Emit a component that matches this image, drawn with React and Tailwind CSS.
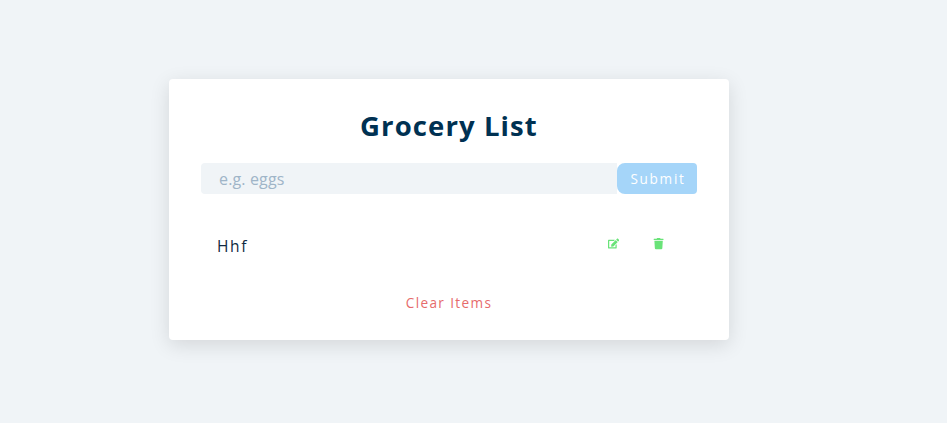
import { FaEdit, FaTrash } from "react-icons/fa";

export default function App() {
  return (
    <main className="h-[423px] bg-[#f0f4f7] pt-[79px] pl-[169px] font-['Open_Sans','Noto_Sans',sans-serif] text-[#102a42]">
      <section className="h-[261px] w-[560px] rounded bg-white px-8 pt-[31px] shadow-[0_5px_20px_rgba(0,0,0,0.12)]">
        <h3 className="mb-[21px] text-center text-[27.5px] leading-8 font-bold tracking-[1.1px] text-[#003152]">Grocery List</h3>
        <form className="flex h-[31px]">
          <input className="min-w-0 flex-1 rounded-l bg-[#f0f4f7] pl-[18px] text-base tracking-[0.15px] outline-none placeholder:text-[#9fb5c8]" placeholder="e.g. eggs" />
          <button type="button" className="w-20 rounded-l-lg rounded-r bg-[#a5d5f9] pt-0.5 pl-0.5 text-[13.6px] tracking-[1.7px] text-white">Submit</button>
        </form>
        <div className="mt-10 flex h-6 items-center pl-4">
          <p className="flex-1 text-[15.5px] leading-6 tracking-[1.6px]">Hhf</p>
          <div className="mb-1 flex gap-[34px] pr-[33px] text-[11.2px] text-[#69e378]">
            <FaEdit />
            <FaTrash />
          </div>
        </div>
        <button className="mx-auto mt-[33px] block text-[13.6px] leading-6 tracking-[1.35px] text-[#e66b6b]">Clear Items</button>
      </section>
    </main>
  );
}
